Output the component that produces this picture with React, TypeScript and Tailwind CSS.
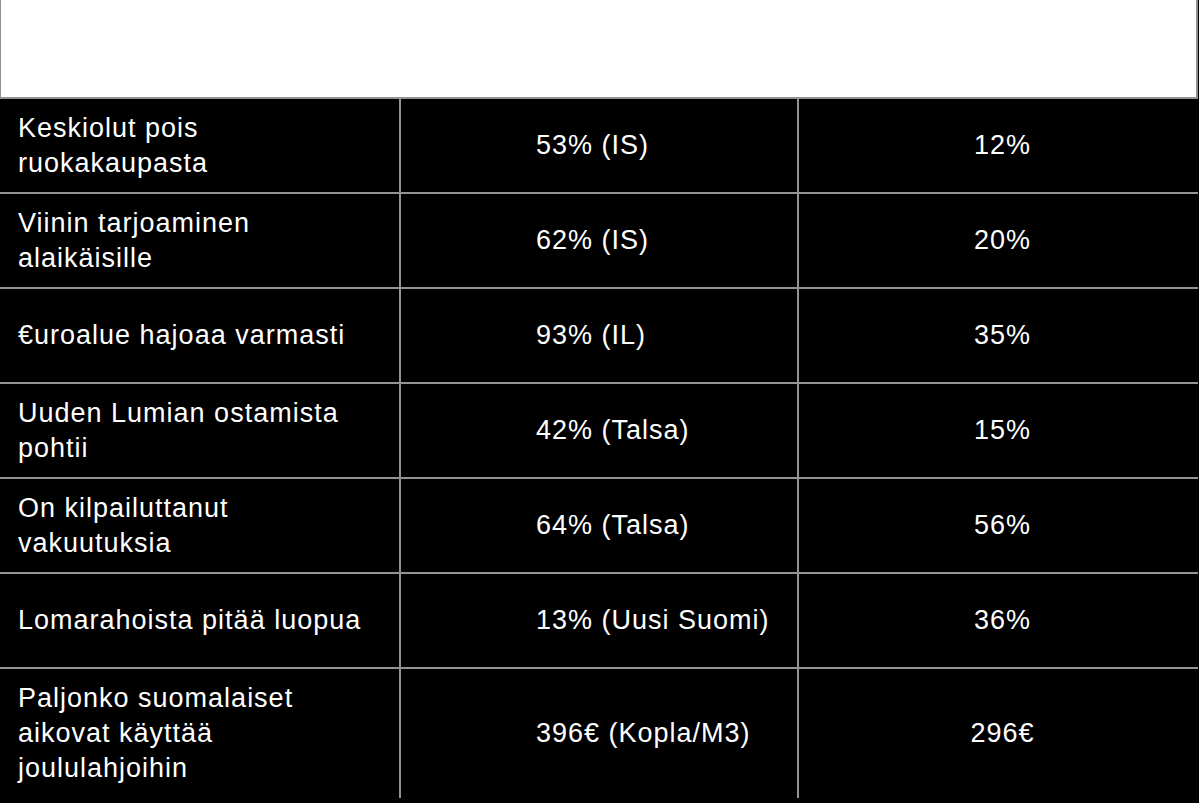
import React from 'react';

const rows = [
  { label: ['Keskiolut pois', 'ruokakaupasta'], media: '53% (IS)', real: '12%' },
  { label: ['Viinin tarjoaminen', 'alaikäisille'], media: '62% (IS)', real: '20%' },
  { label: ['€uroalue hajoaa varmasti'], media: '93% (IL)', real: '35%' },
  { label: ['Uuden Lumian ostamista', 'pohtii'], media: '42% (Talsa)', real: '15%' },
  { label: ['On kilpailuttanut', 'vakuutuksia'], media: '64% (Talsa)', real: '56%' },
  { label: ['Lomarahoista pitää luopua'], media: '13% (Uusi Suomi)', real: '36%' },
  {
    label: ['Paljonko suomalaiset', 'aikovat käyttää', 'joululahjoihin'],
    media: '396€ (Kopla/M3)',
    real: '296€',
  },
];

const App = () => {
  return (
    <div
      className="w-[1199px] h-[803px] bg-black overflow-hidden text-white text-[27px] leading-[35px] tracking-[1px]"
      style={{ fontFamily: '"Liberation Sans", Arial, sans-serif' }}
    >
      <div className="w-[1198px]">
        {/* header */}
        <div className="h-[97px] bg-white border-l border-r-2 border-[#8f8f8f]" />

        {rows.map((row, i) => {
          const last = i === rows.length - 1;
          return (
            <div
              key={i}
              className={`grid grid-cols-[399px_398px_1fr] border-t-2 border-[#939393] ${
                last ? 'h-[131px]' : 'h-[95px]'
              }`}
            >
              <div className="flex items-center pl-[18px]">
                <div>
                  {row.label.map((line, j) => (
                    <div key={j}>{line}</div>
                  ))}
                </div>
              </div>
              <div className="flex items-center border-l-2 border-[#939393] pl-[135px]">
                {row.media}
              </div>
              <div className="flex items-center justify-center border-l-2 border-[#939393] pl-[8px]">
                {row.real}
              </div>
            </div>
          );
        })}
      </div>
    </div>
  );
};

export default App;
